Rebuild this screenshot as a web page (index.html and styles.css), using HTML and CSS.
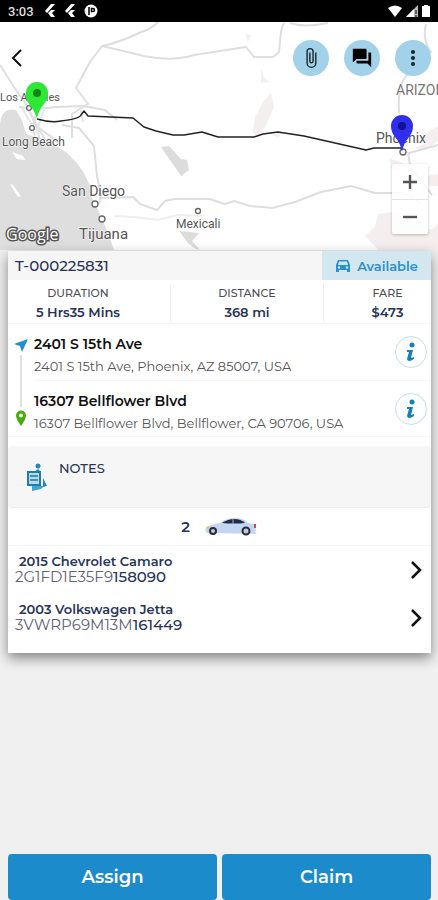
FILE: index.html
```html
<!DOCTYPE html>
<html lang="en">
<head>
    <meta charset="UTF-8">
    <meta name="viewport" content="width=device-width, initial-scale=1.0">
    <title>T-000225831</title>
    <link rel="stylesheet" href="styles.css">
</head>
<body>
    <header class="status-bar">
        <div class="status-group">
            <span>3:03</span>
            <svg width="12" height="14" viewBox="0 0 12 14"><path d="M7 0h4L3 9 1 7zM7 6h4L8 9l3 4H7L4 9z" fill="#fff"/></svg>
            <svg width="12" height="14" viewBox="0 0 12 14"><path d="M7 0h4L3 9 1 7zM7 6h4L8 9l3 4H7L4 9z" fill="#fff"/></svg>
            <svg width="14" height="14" viewBox="0 0 14 14"><circle cx="7" cy="7" r="6.500" fill="#fff"/><path d="M5 3v8M7.500 4.500h1.500a1.500 1.500 0 0 1 0 3H7.500z" fill="none" stroke="#000" stroke-width="1.500"/></svg>
        </div>
        <div class="status-icons">
            <svg width="14" height="12" viewBox="0 0 14 12"><path d="M0 3Q7-2 14 3L7 12z" fill="#fff"/></svg>
            <svg width="12" height="12" viewBox="0 0 12 12"><path d="M12 0v12H0z" fill="#bbb"/><path d="M8 4v8H0z" fill="#fff"/><path d="M10 5v4M10 10v2" stroke="#000"/></svg>
            <svg width="8" height="12" viewBox="0 0 8 12"><path d="M2 0h4v1h2v11H0V1h2z" fill="#fff"/></svg>
        </div>
    </header>

    <section class="map">
        <svg class="map-canvas" viewBox="0 22 438 228" preserveAspectRatio="xMidYMid slice">
            <rect y="22" width="438" height="228" fill="#fff"/>
            <!-- ocean and lakes -->
            <path d="M0 134Q-2 106 16 110L22 120 26 134 40 138 58 147 66 152 76 162 84 173 90 186 91 196 99 212 108 233 114 250H0z" fill="#dedede"/>
            <path d="M12 152l11 4 2 4-8-1zM10 184l3 1 8 11-3 1z" fill="#fff"/>
            <path d="M161 147l8-1 12 13 6 1 2 10-8 6z" fill="#dcdcdc"/>
            <path d="M179 231l20 2-7 8 8 9-6-2-6-5z" fill="#dcdcdc"/>
            <!-- reserves -->
            <path d="M271 93l3 14-8 18-8 13-5-7 2-14 8-15zM261 68l3 10 6 4-9 1zM245 34l6 1-3 7zM272 135l12-3-6 5zM389 158l14 5v7h-11zM414 148l10-4v-10l14-8v15l-12 9zM428 176l10-2v12h-10zM378 214l18-2 35 18 7-6v26h-60l-13-14 10-9z" fill="#f5eeee"/>
            <!-- roads -->
            <g fill="none" stroke="#dedede" stroke-width="2" stroke-linejoin="round">
                <path d="M0 65l14 22 12 17 11 24 4 17M158 22q-8 8-17 10-20 10-39 14L90 62 76 88l12 16-16 10v24M102 46l42 10q28 6 50-1l26-4 26-4 8 10 19 0 6-5 2-20q2-9 4-9M37 109l20-2 26-1 22 4 12 10M19 107l19 2-6 18 4 13M37 125l12 22 18 8M26 104l12 23 21 16M62 125l17 3 15 18 3 30 4 20-2 8M99 198l34-1 7 7 17 6 8-9 10-2h35q8 3 15 5l9-3 16 5 22 2 23-6 26-10 30-6 24 7h28l18 10"/>
                <path d="M114 216l20 1 24 3 20-5 24 1" stroke="#eee"/>
                <path d="M290 23q14 5 38 0M426 24q-4 16 5 28l-22 21q-12 10-10 40M408 152l2 13 22 30M409 153l29-8"/>
            </g>
            <path d="M22 108l13 22M45 107l-9 26M50 135l8 8M80 106l3 16" fill="none" stroke="#e6e6e6" stroke-width="2"/>
            <!-- route -->
            <path d="M37 119q14 4 24 2 18-2 20-6l3-4 4 5 45 2 11 9 12 4 17 4h11l18-3 16 5h36l9-3 15-2 26 4 62 14 8-2h29" fill="none" stroke="#222" stroke-width="1.500" stroke-linejoin="round"/>
            <g fill="#fff" stroke="#666" stroke-width="1.300">
                <circle cx="32" cy="128" r="2.300"/><circle cx="29" cy="108" r="2.300"/><circle cx="95" cy="204" r="3"/><circle cx="102" cy="219" r="3"/><circle cx="198" cy="211" r="2.500"/><circle cx="403" cy="152" r="3"/>
            </g>
            <g class="map-labels">
                <text x="0" y="101" font-size="11">Los Angeles</text>
                <text x="2" y="146" font-size="12">Long Beach</text>
                <text x="62" y="196" font-size="14">San Diego</text>
                <text x="79" y="239" font-size="15">Tijuana</text>
                <text x="176" y="228" font-size="12">Mexicali</text>
                <text x="376" y="143" font-size="14">Phoenix</text>
                <text x="396" y="95" font-size="14" fill="#777">ARIZONA</text>
            </g>
            <text class="map-logo" x="6" y="240">Google</text>
            <path d="M37 119q-2-8-8-15-4-5-3-11a11 11 0 0 1 22 0q0 6-4 11-6 7-7 15z" fill="#2fe836"/>
            <circle cx="37" cy="93" r="4" fill="#118516"/>
            <path d="M402 152q-1-8-7-15-4-5-4-11a11 11 0 0 1 22 0q0 6-4 11-6 7-7 15z" fill="#302fee"/>
            <circle cx="402" cy="126" r="4" fill="#14128c"/>
        </svg>

        <nav class="map-nav">
            <button class="back-btn" aria-label="Back">
                <svg width="12" height="18" viewBox="0 0 12 18"><path d="M10 1 2 9l8 8" fill="none" stroke="#111" stroke-width="2"/></svg>
            </button>
            <div class="map-actions">
                <button class="round-btn" aria-label="Attachments">
                    <svg width="22" height="22" viewBox="0 0 24 24"><path d="M16.500 6v11.500a4 4 0 0 1-8 0V5a2.500 2.500 0 0 1 5 0v10.500a1 1 0 0 1-2 0V6H10v9.500a2.500 2.500 0 0 0 5 0V5a4 4 0 0 0-8 0v12.500a5.500 5.500 0 0 0 11 0V6z" fill="#16232a"/></svg>
                </button>
                <button class="round-btn" aria-label="Messages">
                    <svg width="22" height="22" viewBox="0 0 24 24"><path d="M21 6h-2v9H6v2c0 .550.450 1 1 1h11l4 4V7c0-.550-.450-1-1-1zm-4 6V3c0-.550-.450-1-1-1H3c-.550 0-1 .450-1 1v14l4-4h10c.550 0 1-.450 1-1z" fill="#000"/></svg>
                </button>
                <button class="round-btn" aria-label="More">
                    <svg width="22" height="22" viewBox="0 0 22 22"><g fill="#16232a"><circle cx="11" cy="5" r="2"/><circle cx="11" cy="11" r="2"/><circle cx="11" cy="17" r="2"/></g></svg>
                </button>
            </div>
        </nav>

        <div class="zoom-control">
            <button aria-label="Zoom in"><svg width="16" height="16" viewBox="0 0 16 16"><path d="M8 1v14M1 8h14" stroke="#555" stroke-width="2.400"/></svg></button>
            <button aria-label="Zoom out"><svg width="16" height="16" viewBox="0 0 16 16"><path d="M1 8h14" stroke="#555" stroke-width="2.400"/></svg></button>
        </div>
    </section>

    <main class="trip-card">
        <div class="trip-header">
            <h1>T-000225831</h1>
            <div class="trip-status">
                <svg width="16" height="14" viewBox="0 0 16 14"><path d="M3 1h10l2 5v7h-3v-2H4v2H1V6z" fill="#2b8fc8"/><path d="M4 2.500h8L13 6H3z" fill="#d3e7f1"/><circle cx="4" cy="8.500" r="1.200" fill="#d3e7f1"/><circle cx="12" cy="8.500" r="1.200" fill="#d3e7f1"/></svg>
                <span>Available</span>
            </div>
        </div>

        <dl class="trip-stats">
            <div class="stat stat-first"><dt>DURATION</dt><dd>5 Hrs35 Mins</dd></div>
            <div class="stat"><dt>DISTANCE</dt><dd>368 mi</dd></div>
            <div class="stat stat-last"><dt>FARE</dt><dd>$473</dd></div>
        </dl>

        <div class="stops">
            <div class="stops-track">
                <svg width="14" height="14" viewBox="0 0 14 14"><path d="M14 1 8 14 6 8 0 6z" fill="#1e90d0"/></svg>
                <span class="track-line"></span>
                <svg width="12" height="16" viewBox="0 0 12 16"><path fill-rule="evenodd" d="M6 16Q1 9 1 5.500a5 5 0 0 1 10 0Q11 9 6 16zM6 3.500a2 2 0 1 0 0 4 2 2 0 0 0 0-4z" fill="#46ad0c"/></svg>
            </div>
            <div class="stops-list">
                <div class="stop">
                    <div class="stop-text">
                        <h2>2401 S 15th Ave</h2>
                        <p>2401 S 15th Ave, Phoenix, AZ 85007, USA</p>
                    </div>
                    <button class="info-btn" aria-label="Pickup details">
                        <svg width="12" height="20" viewBox="0 0 12 20"><circle cx="7" cy="3" r="2.500" fill="#167fba"/><path d="M2 8h6L6 16l3-1v2q-6 4-7 0l2-7-2 0z" fill="#167fba"/></svg>
                    </button>
                </div>
                <div class="stop">
                    <div class="stop-text">
                        <h2>16307 Bellflower Blvd</h2>
                        <p>16307 Bellflower Blvd, Bellflower, CA 90706, USA</p>
                    </div>
                    <button class="info-btn" aria-label="Delivery details">
                        <svg width="12" height="20" viewBox="0 0 12 20"><circle cx="7" cy="3" r="2.500" fill="#167fba"/><path d="M2 8h6L6 16l3-1v2q-6 4-7 0l2-7-2 0z" fill="#167fba"/></svg>
                    </button>
                </div>
            </div>
        </div>

        <div class="notes">
            <svg width="20" height="28" viewBox="0 0 20 28"><circle cx="11" cy="3" r="2.500" fill="#2187b8"/><path d="M7 9l4-3 3 3v11H7zM16 15l4 8-4 1z" fill="#2187b8"/><path d="M5 22l12 1-3 3-9 2z" fill="#46a3d0"/><path d="M1 9h12v13H1z" fill="#b9d9e8" stroke="#1a7eb3" stroke-width="2"/><path d="M3 13h8M3 17h8" stroke="#3f91b9" stroke-width="2"/></svg>
            <h3>NOTES</h3>
        </div>

        <div class="vehicle-count">
            <span>2</span>
            <svg width="54" height="20" viewBox="0 0 54 20"><path d="M2 16l49 1 2-2H2z" fill="#d6dbe3"/><path d="M1 12q5-5 15-6Q22 1 31 1q9 0 13 5l7 1 1 7-3 2H3z" fill="#c5d6f5"/><path d="M18 6q6-4 12-4 7 0 11 4-11 1-23 0z" fill="#222c43"/><path d="M29 2v5" stroke="#9daac5"/><path d="M2 10l4-1-2 3z" fill="#e3b458"/><path d="M50 7l2 0v4h-2z" fill="#df4052"/><g fill="#c8cbd3" stroke="#252c3b" stroke-width="2"><circle cx="9" cy="14" r="3"/><circle cx="42" cy="14" r="3.500"/></g></svg>
        </div>

        <ul class="vehicles">
            <li>
                <a href="#camaro" class="vehicle">
                    <span class="vehicle-text">
                        <span class="vehicle-name">2015 Chevrolet Camaro</span>
                        <span class="vin">2G1FD1E35F9<b>158090</b></span>
                    </span>
                    <svg width="12" height="18" viewBox="0 0 12 18"><path d="M2 1l8 8-8 8" fill="none" stroke="#111" stroke-width="2.500"/></svg>
                </a>
            </li>
            <li>
                <a href="#jetta" class="vehicle">
                    <span class="vehicle-text">
                        <span class="vehicle-name">2003 Volkswagen Jetta</span>
                        <span class="vin">3VWRP69M13M<b>161449</b></span>
                    </span>
                    <svg width="12" height="18" viewBox="0 0 12 18"><path d="M2 1l8 8-8 8" fill="none" stroke="#111" stroke-width="2.500"/></svg>
                </a>
            </li>
        </ul>
    </main>

    <footer class="actions">
        <button class="action-btn">Assign</button>
        <button class="action-btn">Claim</button>
    </footer>
</body>
</html>
```

FILE: styles.css
```css
:root {
    --primary: #1b8bcb;
    --navy: #283457;
    --page-bg: #f0f0f0;
    --panel-bg: #f6f6f6;
    --line: #f6f6f6;
}

* {
    margin: 0;
    padding: 0;
    box-sizing: border-box;
}

body {
    background: var(--page-bg);
    color: var(--navy);
    font-family: Montserrat, Inter, sans-serif;
    min-height: 100vh;
    display: flex;
    flex-direction: column;
}

button {
    border: none;
    background: none;
    font-family: inherit;
    cursor: pointer;
}

svg {
    display: block;
    flex-shrink: 0;
}

/* Status bar */
.status-bar {
    height: 22px;
    padding: 0 8px;
    background: #000;
    color: #ddd;
    display: flex;
    justify-content: space-between;
    align-items: center;
    font: 500 13px Roboto, sans-serif;
}

.status-group {
    display: flex;
    align-items: center;
    gap: 8px;
}

.status-group span {
    margin-right: 2px;
}

.status-icons {
    display: flex;
    gap: 4px;
}

/* Map */
.map {
    position: relative;
    height: 228px;
}

.map-canvas {
    width: 100%;
    height: 100%;
}

.map-labels {
    font-family: Roboto, sans-serif;
    fill: #555;
    stroke: #fff;
    stroke-width: 1px;
    paint-order: stroke;
}

.map-logo {
    font: 500 16px "Open Sans", sans-serif;
    fill: #fff;
    stroke: #555;
    stroke-width: 3px;
    paint-order: stroke;
}

.map-nav {
    position: absolute;
    top: 18px;
    left: 0;
    right: 0;
    padding: 0 7px 0 5px;
    display: flex;
    justify-content: space-between;
}

.back-btn {
    width: 24px;
    display: grid;
    place-items: center;
}

.map-actions {
    display: flex;
    gap: 15px;
}

.round-btn {
    width: 36px;
    height: 36px;
    border-radius: 50%;
    background: #a2d2ea;
    display: grid;
    place-items: center;
}

.zoom-control {
    position: absolute;
    right: 10px;
    bottom: 16px;
    width: 36px;
    background: rgba(255, 255, 255, 0.85);
    border-radius: 2px;
    box-shadow: 0 1px 3px rgba(0, 0, 0, 0.25);
}

.zoom-control button {
    width: 100%;
    height: 35px;
    display: grid;
    place-items: center;
}

.zoom-control button + button {
    border-top: 1px solid #e4e4e4;
}

/* Trip card */
.trip-card {
    position: relative;
    margin: 1px 7px 0 8px;
    padding-bottom: 11px;
    background: #fff;
    box-shadow: 0 5px 12px rgba(0, 0, 0, 0.45);
}

.trip-header {
    display: flex;
    height: 29px;
    background: var(--panel-bg);
}

.trip-header h1 {
    flex: 1;
    padding-left: 7px;
    font-size: 15px;
    font-weight: 500;
    line-height: 30px;
}

.trip-status {
    width: 109px;
    background: #d3e7f1;
    color: #2b8fc8;
    display: flex;
    align-items: center;
    justify-content: center;
    gap: 6px;
    font-size: 13px;
    font-weight: 600;
}

/* Stats */
.trip-stats {
    display: grid;
    grid-template-columns: 162fr 153fr 108fr;
    padding: 4px 0 1px;
    border-bottom: 1px solid var(--line);
    text-align: center;
}

.stat + .stat {
    border-left: 1px solid #eee;
}

.stat-first {
    padding-right: 22px;
}

.stat-last {
    padding-left: 20px;
}

.stat dt {
    color: #4c4c54;
    font-size: 11px;
    font-weight: 500;
    line-height: 19px;
}

.stat dd {
    font-size: 13px;
    font-weight: 600;
    line-height: 19px;
}

/* Stops */
.stops {
    display: flex;
    border-bottom: 1px solid var(--line);
}

.stops-track {
    width: 26px;
    padding: 14px 0 10px;
    display: flex;
    flex-direction: column;
    align-items: center;
    gap: 3px;
}

.track-line {
    flex: 1;
    width: 2px;
    background: #e0e0e0;
}

.stops-list {
    flex: 1;
}

.stop {
    height: 56px;
    padding-right: 4px;
    display: flex;
    align-items: center;
    justify-content: space-between;
}

.stop + .stop {
    border-top: 1px solid var(--line);
}

.stop-text {
    padding-top: 6px;
}

.stop-text h2 {
    color: #111;
    font-size: 14px;
    font-weight: 600;
    line-height: 22px;
}

.stop-text p {
    color: #555;
    font-size: 13px;
    line-height: 22px;
}

.info-btn {
    width: 32px;
    height: 32px;
    border: 1px solid #c4dfee;
    border-radius: 50%;
    display: grid;
    place-items: center;
}

/* Notes */
.notes {
    margin-top: 9px;
    height: 62px;
    padding: 12px 19px;
    background: var(--panel-bg);
    border-bottom: 1px solid #eee;
    border-radius: 4px;
    display: flex;
    gap: 12px;
}

.notes svg {
    margin-top: 5px;
}

.notes h3 {
    font-size: 13px;
    font-weight: 500;
    line-height: 20px;
}

/* Vehicles */
.vehicle-count {
    height: 38px;
    display: flex;
    align-items: center;
    justify-content: center;
    gap: 14px;
    border-bottom: 1px solid var(--line);
    font-size: 15px;
    font-weight: 600;
}

.vehicles {
    list-style: none;
}

.vehicle {
    height: 48px;
    padding: 0 9px 0 7px;
    display: flex;
    align-items: center;
    justify-content: space-between;
    color: inherit;
    text-decoration: none;
}

.vehicle-text {
    padding-bottom: 3px;
}

.vehicle-name,
.vin {
    display: block;
    line-height: 16px;
}

.vehicle-name {
    padding-left: 4px;
    font-size: 13px;
    font-weight: 600;
}

.vin {
    color: #5f6374;
    font-size: 15px;
}

.vin b {
    color: var(--navy);
    font-weight: 500;
}

/* Bottom actions */
.actions {
    margin-top: auto;
    padding: 0 7px 0 8px;
    display: flex;
    gap: 5px;
}

.action-btn {
    flex: 1;
    height: 46px;
    background: var(--primary);
    color: #fff;
    border-radius: 4px;
    font-size: 18px;
    font-weight: 600;
}
```
